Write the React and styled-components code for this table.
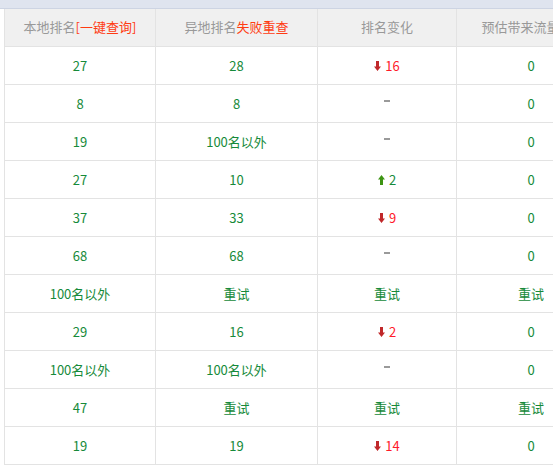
import styled, { createGlobalStyle } from "styled-components";

const GlobalStyle = createGlobalStyle`
  html, body {
    margin: 0;
    padding: 0;
    background: #fff;
    overflow: hidden;
  }
  body {
    font-family: "Noto Sans CJK SC", "Noto Sans", sans-serif;
    font-size: 13px;
  }
`;

const rows = [
  { local: "27", remote: "28", change: { dir: "down", n: 16 }, flow: "0" },
  { local: "8", remote: "8", change: null, flow: "0" },
  { local: "19", remote: "100名以外", change: null, flow: "0" },
  { local: "27", remote: "10", change: { dir: "up", n: 2 }, flow: "0" },
  { local: "37", remote: "33", change: { dir: "down", n: 9 }, flow: "0" },
  { local: "68", remote: "68", change: null, flow: "0" },
  { local: "100名以外", remote: "重试", change: "retry", flow: "重试" },
  { local: "29", remote: "16", change: { dir: "down", n: 2 }, flow: "0" },
  { local: "100名以外", remote: "100名以外", change: null, flow: "0" },
  { local: "47", remote: "重试", change: "retry", flow: "重试" },
  { local: "19", remote: "19", change: { dir: "down", n: 14 }, flow: "0" },
];

function Arrow({ dir }) {
  const fill = dir === "up" ? "#3d9413" : "#c0282a";
  return (
    <ArrowIcon width="7" height="10" viewBox="0 0 7 10">
      {dir === "up" ? (
        <path d="M3.5 0 L7 4.5 L5 4.5 L5 10 L2 10 L2 4.5 L0 4.5 Z" fill={fill} />
      ) : (
        <path d="M2 0 L5 0 L5 5.5 L7 5.5 L3.5 10 L0 5.5 L2 5.5 Z" fill={fill} />
      )}
    </ArrowIcon>
  );
}

function Change({ value }) {
  if (value === "retry") return <Cell>重试</Cell>;
  if (!value) {
    return (
      <Cell>
        <Dash />
      </Cell>
    );
  }
  return (
    <Cell>
      <Arrow dir={value.dir} />
      <Num $up={value.dir === "up"}>{value.n}</Num>
    </Cell>
  );
}

export default function App() {
  return (
    <>
      <GlobalStyle />
      <TopBand />
      <Table>
        <HeadRow>
          <HeadCell>
            本地排名<Red>[一键查询]</Red>
          </HeadCell>
          <HeadCell>
            异地排名<Red>失败重查</Red>
          </HeadCell>
          <HeadCell>排名变化</HeadCell>
          <HeadCell>预估带来流量(IP)</HeadCell>
        </HeadRow>
        {rows.map((r, i) => (
          <Row key={i}>
            <Cell>{r.local}</Cell>
            <Cell>{r.remote}</Cell>
            <Change value={r.change} />
            <Cell>{r.flow}</Cell>
          </Row>
        ))}
      </Table>
    </>
  );
}

const TopBand = styled.div`
  height: 8px;
  background: #dfe4ef;
  border-bottom: 1px solid #cdd4e3;
`;

const Table = styled.div`
  margin-left: 4px;
  width: 602px;
  border-left: 1px solid #e3e3e3;
`;

const Row = styled.div`
  display: grid;
  grid-template-columns: 151px 162px 139px 149px;
  height: 38px;
  border-bottom: 1px solid #e3e3e3;
  box-sizing: border-box;
`;

const HeadRow = styled(Row)`
  height: 38px;
  background: #f0f0f0;
`;

const Cell = styled.div`
  display: flex;
  align-items: center;
  justify-content: center;
  gap: 4px;
  border-right: 1px solid #e3e3e3;
  color: #168a3a;
  white-space: nowrap;
  overflow: hidden;
`;

const HeadCell = styled(Cell)`
  color: #999;
  gap: 0;
  padding-bottom: 2px;
`;

const Red = styled.span`
  color: #ff3b12;
`;

const Num = styled.span`
  color: ${(p) => (p.$up ? "#168a3a" : "#ff1a2a")};
`;

const ArrowIcon = styled.svg`
  display: block;
  flex: none;
`;

const Dash = styled.span`
  display: block;
  width: 6px;
  height: 2px;
  background: #9a9a9a;
  margin-top: -5px;
`;
